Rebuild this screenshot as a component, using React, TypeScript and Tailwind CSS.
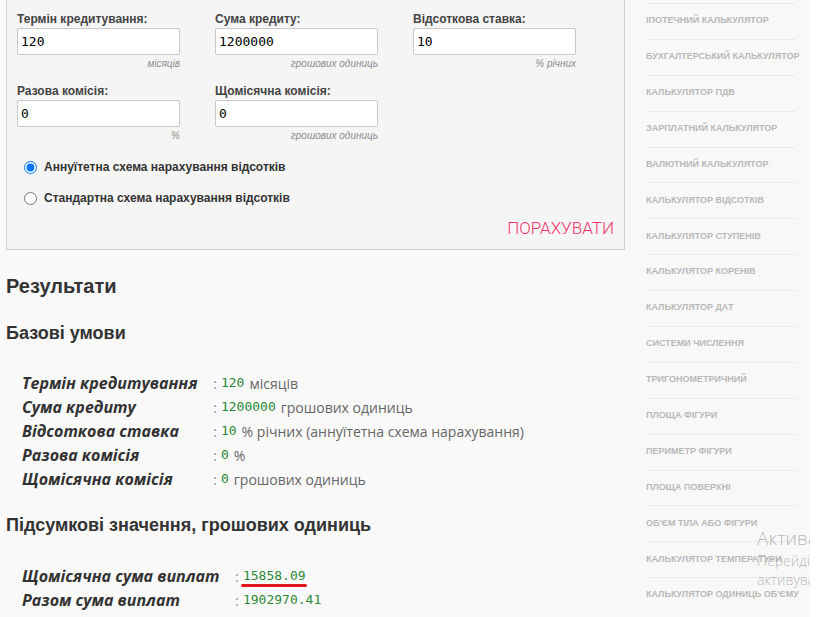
import React from "react";

const sidebarLinks = [
  "Іпотечний калькулятор",
  "Бухгалтерський калькулятор",
  "Калькулятор ПДВ",
  "Зарплатний калькулятор",
  "Валютний калькулятор",
  "Калькулятор відсотків",
  "Калькулятор ступенів",
  "Калькулятор коренів",
  "Калькулятор дат",
  "Системи числення",
  "Тригонометричний",
  "Площа фігури",
  "Периметр фігури",
  "Площа поверхні",
  "Об'єм тіла або фігури",
  "Калькулятор температури",
  "Калькулятор одиниць об'єму",
];

const fields = [
  { label: "Термін кредитування:", value: "120", hint: "місяців" },
  { label: "Сума кредиту:", value: "1200000", hint: "грошових одиниць" },
  { label: "Відсоткова ставка:", value: "10", hint: "% річних" },
  { label: "Разова комісія:", value: "0", hint: "%" },
  { label: "Щомісячна комісія:", value: "0", hint: "грошових одиниць" },
];

const baseTerms = [
  { label: "Термін кредитування", num: "120", rest: "місяців" },
  { label: "Сума кредиту", num: "1200000", rest: "грошових одиниць" },
  { label: "Відсоткова ставка", num: "10", rest: "% річних (аннуїтетна схема нарахування)" },
  { label: "Разова комісія", num: "0", rest: "%" },
  { label: "Щомісячна комісія", num: "0", rest: "грошових одиниць" },
];

const totals = [
  { label: "Щомісячна сума виплат", num: "15858.09", marked: true },
  { label: "Разом сума виплат", num: "1902970.41" },
  { label: "Загальна комісія", num: "0.00" },
];

const mono = "font-['DejaVu_Sans_Mono',monospace]";

// one row of the result tables
const ResultRow = ({
  label,
  num,
  rest,
  marked,
  labelWidth,
}: {
  label: string;
  num: string;
  rest?: string;
  marked?: boolean;
  labelWidth: string;
}) => (
  <div className="flex h-[24px] items-center">
    <div className={`${labelWidth} shrink-0 text-[16px] font-bold italic text-[#333]`}>{label}</div>
    <div className="flex items-center text-[14px] text-[#666]">
      <span className="text-[15px] text-[#999]">:</span>
      <span className="w-[4px]" />
      <span className={`relative ${mono} text-[13px] text-[#2b8a35]`}>
        {num}
        {marked && (
          <span className="absolute left-[-2px] right-[-1px] top-[18px] h-[3px] rounded-full bg-[#e3161d]" />
        )}
      </span>
      {rest && <span className="ml-[5px] whitespace-nowrap">{rest}</span>}
    </div>
  </div>
);

export default function App() {
  return (
    <div className="flex h-[617px] overflow-hidden bg-white font-['Liberation_Sans',Arial,sans-serif]">
      {/* main column */}
      <div className="w-[625px] shrink-0 bg-[#f9f9f9] pl-[6px]">
        <div className="w-[619px] border-x border-b border-[#cfcfcf] bg-[#f5f5f5] pt-[11px] pb-[11px]">
          <div className="grid grid-cols-[163px_163px_163px] gap-x-[35px] gap-y-[12px] pl-[10px]">
            {fields.map((f) => (
              <div key={f.label} className="flex flex-col">
                <label className="mb-[1px] text-[12px] leading-4 font-bold text-[#444]">{f.label}</label>
                <input
                  defaultValue={f.value}
                  className={`h-[27px] w-full rounded-[2px] border border-[#c9c9c9] bg-white px-[3px] ${mono} text-[13px] text-black outline-none`}
                />
                <div className="mt-[2px] text-right text-[10px] leading-[14px] italic text-[#8c8c8c]">{f.hint}</div>
              </div>
            ))}
          </div>

          <div className="mt-[14px] flex flex-col gap-[11px] pl-[17px]">
            <label className="flex h-[20px] items-center gap-[7px] text-[12px] font-bold text-[#333]">
              <input type="radio" name="scheme" defaultChecked className="h-[13px] w-[13px]" />
              Аннуїтетна схема нарахування відсотків
            </label>
            <label className="flex h-[20px] items-center gap-[7px] text-[12px] font-bold text-[#333]">
              <input type="radio" name="scheme" className="h-[13px] w-[13px]" />
              Стандартна схема нарахування відсотків
            </label>
          </div>

          <div className="mt-[10px] flex justify-end pr-[10px]">
            <button className="h-[20px] font-['Roboto',sans-serif] text-[17px] leading-5 font-light text-[#f2336a]">
              ПОРАХУВАТИ
            </button>
          </div>
        </div>

        <h2 className="mt-[24px] text-[20px] leading-6 font-bold text-[#333]">Результати</h2>
        <h3 className="mt-[24px] text-[18px] leading-[22px] font-bold text-[#333]">Базові умови</h3>

        <div className="mt-[27px] pl-[16px] font-['Open_Sans',sans-serif]">
          {baseTerms.map((r) => (
            <ResultRow key={r.label} {...r} labelWidth="w-[191px]" />
          ))}
        </div>

        <h3 className="mt-[23px] text-[18px] leading-[22px] font-bold text-[#333]">
          Підсумкові значення, грошових одиниць
        </h3>

        <div className="mt-[28px] pl-[16px] font-['Open_Sans',sans-serif]">
          {totals.map((r) => (
            <ResultRow key={r.label} {...r} labelWidth="w-[213px]" />
          ))}
        </div>
      </div>

      {/* sidebar */}
      <div className="relative w-[185px] shrink-0 overflow-hidden bg-[#f8f8f8] pl-[21px] pr-[14px] pt-[3px]">
        {sidebarLinks.map((s) => (
          <div
            key={s}
            className="flex h-[35.9px] items-center border-t border-[#ebebeb] pb-[1px] text-[9px] font-bold whitespace-nowrap text-[#b8b8b8] uppercase"
          >
            {s}
          </div>
        ))}

        {/* windows activation watermark */}
        <div className="pointer-events-none absolute top-[525px] left-[132px] font-['Open_Sans',sans-serif] font-light whitespace-nowrap text-[#a8a8a8]/80">
          <div className="text-[19px] leading-[26px]">Активація Windows</div>
          <div className="text-[14px] leading-[19px]">Перейдіть до розділу</div>
          <div className="text-[14px] leading-[20px]">активувати Windows.</div>
        </div>
      </div>
    </div>
  );
}
